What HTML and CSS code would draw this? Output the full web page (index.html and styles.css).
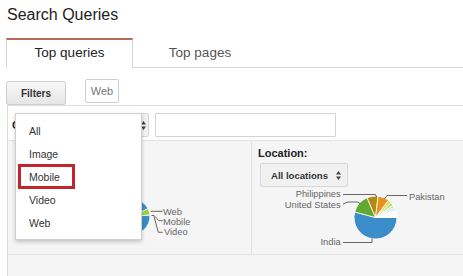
FILE: index.html
```html
<!DOCTYPE html>
<html lang="en">
<head>
  <meta charset="UTF-8">
  <title>Search Queries</title>
  <link rel="stylesheet" href="styles.css">
</head>
<body>
  <h1 class="page-title">Search Queries</h1>

  <div class="tabs">
    <div class="tab tab-active">Top queries</div>
    <div class="tab">Top pages</div>
  </div>

  <div class="filter-bar">
    <div class="filters-wrap">
      <button class="btn-filters">Filters</button>
      <!-- открытое меню фильтра -->
      <ul class="filter-menu">
        <li>All</li>
        <li>Image</li>
        <li><span class="marked">Mobile</span></li>
        <li>Video</li>
        <li>Web</li>
      </ul>
    </div>
    <span class="chip">Web</span>
  </div>

  <div class="panel">
    <div class="query-row">
      <span class="query-label">Query:</span>
      <div class="select select-query">
        <span>Containing</span>
        <svg class="updown" width="5" height="9" viewBox="0 0 5 9"><path d="M0 3.5 L2.5 0 L5 3.5 Z M0 5.5 L2.5 9 L5 5.5 Z" fill="#444"/></svg>
      </div>
      <input class="query-input" type="text">
    </div>

    <div class="charts">
      <div class="chart-cell">
        <svg width="243" height="113" viewBox="0 0 243 113">
          <path d="M124.5 75.5 L141.93 73.97 A17.5 17.5 0 1 1 140.09 67.55 Z" fill="#3a8dc9" stroke="#fff" stroke-width="0.8"/>
          <path d="M124.5 75.5 L140.09 67.55 A17.5 17.5 0 0 1 141.93 73.97 Z" fill="#a0cf4a" stroke="#fff" stroke-width="0.8"/>
          <g fill="none" stroke="#666" stroke-width="1">
            <path d="M142.7 70.3 H154.7"/>
            <path d="M143.5 74.5 H146 L151 79.7 H154.7"/>
            <path d="M146 75.5 L150.3 91.3 H154.7"/>
          </g>
          <g class="chart-text">
            <text x="155" y="73.5">Web</text>
            <text x="155" y="84">Mobile</text>
            <text x="156" y="94">Video</text>
          </g>
        </svg>
      </div>

      <div class="chart-cell chart-location">
        <div class="loc-label">Location:</div>
        <div class="select select-loc">
          <span>All locations</span>
          <svg class="updown" width="5" height="9" viewBox="0 0 5 9"><path d="M0 3.5 L2.5 0 L5 3.5 Z M0 5.5 L2.5 9 L5 5.5 Z" fill="#444"/></svg>
        </div>
        <svg class="loc-pie" width="211" height="62" viewBox="0 0 211 62">
          <g stroke="#fff" stroke-width="0.8">
            <path d="M123.5 30.5 L145 30.5 A21.5 21.5 0 1 1 102.73 24.94 Z" fill="#3a8dc9"/>
            <path d="M123.5 30.5 L102.73 24.94 A21.5 21.5 0 0 1 115.10 10.71 Z" fill="#62a832"/>
            <path d="M123.5 30.5 L115.10 10.71 A21.5 21.5 0 0 1 126.12 9.16 Z" fill="#b38a12"/>
            <path d="M123.5 30.5 L126.12 9.16 A21.5 21.5 0 0 1 136.44 13.33 Z" fill="#e98f1d"/>
            <path d="M123.5 30.5 L136.44 13.33 A21.5 21.5 0 0 1 139.23 15.84 Z" fill="#e6dc4e"/>
            <path d="M123.5 30.5 L139.23 15.84 A21.5 21.5 0 0 1 141.11 18.17 Z" fill="#b6d97c"/>
            <path d="M123.5 30.5 L141.11 18.17 A21.5 21.5 0 0 1 142.48 20.41 Z" fill="#cfe7b2"/>
            <path d="M123.5 30.5 L142.48 20.41 A21.5 21.5 0 0 1 143.70 23.15 Z" fill="#d6e8f2"/>
            <path d="M123.5 30.5 L143.70 23.15 A21.5 21.5 0 0 1 145 30.5 Z" fill="#ffffff"/>
          </g>
          <g fill="none" stroke="#666" stroke-width="1">
            <path d="M91 7.5 H123.5 L124.5 10"/>
            <path d="M91 17 L96 15 H106 L108.5 17"/>
            <path d="M155 8.5 H135 L132.5 12"/>
            <path d="M91 55.5 H120 V51.5"/>
          </g>
          <g class="chart-text">
            <text x="88.7" y="10" text-anchor="end">Philippines</text>
            <text x="88.7" y="20.5" text-anchor="end">United States</text>
            <text x="157" y="13">Pakistan</text>
            <text x="88.7" y="58" text-anchor="end">India</text>
          </g>
        </svg>
      </div>
    </div>

    <div class="panel-foot"></div>
  </div>
</body>
</html>
```

FILE: styles.css
```css
html, body {
  margin: 0;
  padding: 0;
}
body {
  background: #fff;
  font-family: 'Liberation Sans', Arial, sans-serif;
  color: #222;
  overflow: hidden;
}
.page-title {
  margin: 0;
  padding: 5px 0 0 7px;
  font-size: 16px;
  line-height: 20px;
  font-weight: normal;
  color: #222;
}

/* вкладки */
.tabs {
  display: flex;
  margin-top: 13px;
  margin-left: 6px;
  height: 29px;
  border-bottom: 1px solid #d4d4d4;
}
.tab {
  box-sizing: border-box;
  width: 134px;
  height: 29px;
  padding-top: 2px;
  text-align: center;
  font-size: 13.5px;
  line-height: 26px;
  color: #555;
}
.tab-active {
  width: 127px;
  height: 30px;
  padding-top: 0;
  background: #fff;
  color: #222;
  border-top: 2px solid #b9685b;
  border-left: 1px solid #d4d4d4;
  border-right: 1px solid #d4d4d4;
}

/* фильтры */
.filter-bar {
  display: flex;
  align-items: flex-start;
  gap: 19px;
  margin-top: 13px;
  padding-left: 6px;
}
.filters-wrap {
  position: relative;
}
.btn-filters {
  display: block;
  width: 60px;
  height: 24px;
  padding: 0;
  border: 1px solid #cfcfcf;
  border-radius: 2px;
  background: linear-gradient(#f8f8f8, #e6e6e6);
  font-family: inherit;
  font-size: 10px;
  font-weight: bold;
  color: #333;
}
.chip {
  box-sizing: border-box;
  display: flex;
  align-items: center;
  justify-content: center;
  width: 34px;
  height: 24px;
  margin-top: -2px;
  border: 1px solid #cfcfcf;
  border-radius: 2px;
  font-size: 11px;
  color: #777;
}
.filter-menu {
  position: absolute;
  top: 32px;
  left: 9px;
  z-index: 10;
  box-sizing: border-box;
  width: 127px;
  margin: 0;
  padding: 5px 0 5px;
  list-style: none;
  background: #fff;
  border: 1px solid #cfcfcf;
  box-shadow: 0 2px 4px rgba(0, 0, 0, 0.2);
}
.filter-menu li {
  display: flex;
  align-items: center;
  height: 23px;
  padding-left: 13px;
  font-size: 10.5px;
  color: #333;
}
.marked {
  box-sizing: border-box;
  display: flex;
  align-items: center;
  height: 25px;
  margin-left: -11px;
  padding: 0 12px 0 8px;
  border: 3px solid #c4252c;
}

/* панель с графиками */
.panel {
  margin-left: 7px;
  border-left: 1px solid #ddd;
  border-top: 1px solid #ddd;
}
.query-row {
  box-sizing: border-box;
  display: flex;
  align-items: flex-start;
  height: 35px;
  padding: 7px 0 0 4px;
  border-bottom: 1px solid #e3e3e3;
}
.query-label {
  width: 44px;
  font-size: 11px;
  font-weight: bold;
  line-height: 24px;
  color: #222;
}
.select {
  box-sizing: border-box;
  display: flex;
  align-items: center;
  justify-content: space-between;
  height: 24px;
  border: 1px solid #d8d8d8;
  border-radius: 2px;
  background: #f1f1f1;
  font-size: 10px;
  font-weight: bold;
  color: #333;
}
.select-query {
  width: 93px;
  padding: 0 2px 0 8px;
}
.query-input {
  box-sizing: border-box;
  width: 181px;
  height: 24px;
  margin: 0 0 0 6px;
  border: 1px solid #d4d4d4;
  border-radius: 1px;
  background: #fff;
}
.charts {
  display: grid;
  grid-template-columns: 243px 1fr;
  height: 113px;
  background: #f5f5f5;
  border-bottom: 1px solid #e3e3e3;
}
.chart-cell svg {
  display: block;
}
.chart-location {
  border-left: 1px solid #e0e0e0;
  padding: 6px 0 0 6px;
}
.loc-label {
  font-size: 11px;
  font-weight: bold;
  line-height: 13px;
  color: #222;
}
.select-loc {
  width: 88px;
  margin: 3px 0 0 2px;
  padding: 0 6px 0 10px;
  font-size: 9.6px;
}
.chart-location .loc-pie {
  margin-left: -6px;
}
.chart-text {
  font-family: 'Liberation Sans', Arial, sans-serif;
  font-size: 9.3px;
  fill: #666;
}
.panel-foot {
  height: 30px;
  background: #f5f5f5;
}
```
